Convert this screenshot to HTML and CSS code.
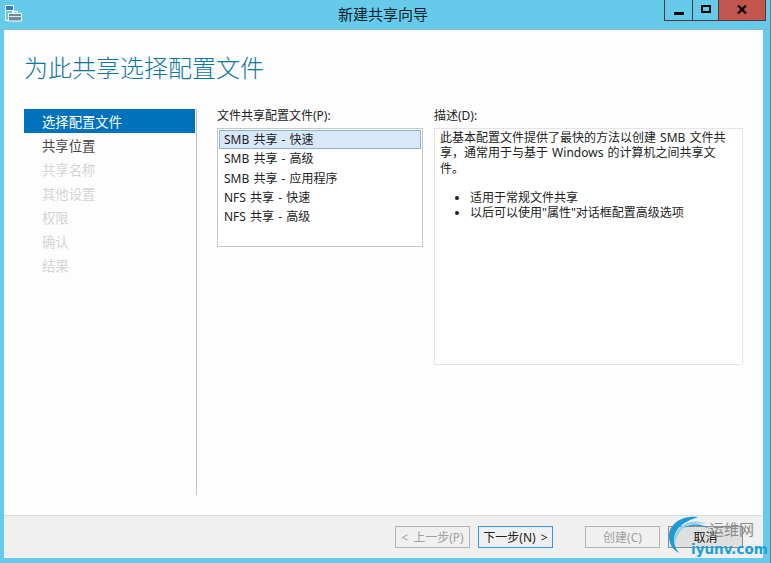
FILE: index.html
```html
<!DOCTYPE html>
<html lang="zh-CN">
<head>
<meta charset="utf-8">
<title>新建共享向导</title>
<link rel="stylesheet" href="styles.css">
</head>
<body>
<div class="window">
  <header class="titlebar">
    <svg class="app-icon" width="17" height="17" viewBox="0 0 17 17">
      <path d="M.5.500h8v15h-8z" fill="#66cbea" stroke="#fff"/>
      <path d="M1 1h7v4H1z" fill="#2b80c8"/>
      <path d="M1 5.500h7" stroke="#fff"/>
      <path d="M3.500 8.500h13v7.500h-13z" fill="#6f8ba0" stroke="#fff"/>
      <path d="M7.500 8.500V6.500h5v2" fill="none" stroke="#fff"/>
      <path d="M4 11.500h12" stroke="#dfe8ee"/>
    </svg>
    <div class="title">新建共享向导</div>
    <div class="controls">
      <div class="ctl ctl-min"><span class="min-glyph"></span></div>
      <div class="ctl ctl-max"><span class="max-glyph"></span></div>
      <div class="ctl ctl-close">
        <svg width="10" height="9" viewBox="0 0 10 9"><path d="M1 .5l8 8M9 .5l-8 8" stroke="#000" stroke-width="2.200" fill="none"/></svg>
      </div>
    </div>
  </header>
  <div class="client">
    <main class="main">
      <h1 class="heading">为此共享选择配置文件</h1>
      <div class="columns">
        <nav class="nav">
          <div class="step step-current">选择配置文件</div>
          <div class="step">共享位置</div>
          <div class="step step-off">共享名称</div>
          <div class="step step-off">其他设置</div>
          <div class="step step-off">权限</div>
          <div class="step step-off">确认</div>
          <div class="step step-off">结果</div>
        </nav>
        <section class="col-list">
          <div class="label">文件共享配置文件(P):</div>
          <div class="listbox">
            <div class="item item-selected">SMB 共享 - 快速</div>
            <div class="item">SMB 共享 - 高级</div>
            <div class="item">SMB 共享 - 应用程序</div>
            <div class="item">NFS 共享 - 快速</div>
            <div class="item">NFS 共享 - 高级</div>
          </div>
        </section>
        <section class="col-desc">
          <div class="label">描述(D):</div>
          <div class="descbox">
            <p class="desc-text">此基本配置文件提供了最快的方法以创建 SMB 文件共享，通常用于与基于 Windows 的计算机之间共享文件。</p>
            <ul class="desc-list">
              <li>适用于常规文件共享</li>
              <li>以后可以使用"属性"对话框配置高级选项</li>
            </ul>
          </div>
        </section>
      </div>
    </main>
    <footer class="footer">
      <button class="btn btn-off">&lt; 上一步(P)</button>
      <button class="btn btn-default">下一步(N) &gt;</button>
      <button class="btn btn-off btn-create">创建(C)</button>
      <button class="btn btn-cancel">取消</button>
    </footer>
  </div>
  <div class="watermark">
    <svg class="wm-swirl" width="52" height="46" viewBox="0 0 52 46">
      <path d="M30 2C14 0 1 9 1 21c0 8 4 14 10 17C6 32 4 23 9 15 14 8 22 5 30 2z" fill="#1b9ad6"/>
      <path d="M38 9C25 3 12 9 8 19c-2 5-2 9-1 12C7 21 14 11 24 9c5-1 10-1 14 0z" fill="#8fd0ec"/>
      <path d="M42 14C33 8 23 8 16 13c7-3 17-3 26 1z" fill="#1b9ad6"/>
    </svg>
    <span class="wm-cn">运维网</span>
    <span class="wm-en">iyunv.com</span>
  </div>
</div>
</body>
</html>
```
FILE: styles.css
```css
* { box-sizing: border-box; }
html, body { margin: 0; padding: 0; }
body {
  width: 771px;
  height: 563px;
  overflow: hidden;
  font-family: "Noto Sans", "Noto Sans CJK SC", sans-serif;
  font-size: 12px;
  word-spacing: 1px;
  color: #1a1a1a;
}
.window {
  position: relative;
  width: 771px;
  height: 563px;
  background: #66cbea;
  display: flex;
  flex-direction: column;
  border-right: 1px solid #3f8fa8;
}
.titlebar {
  height: 30px;
  flex: none;
  display: flex;
  position: relative;
  border-bottom: 1px solid #8fb5c3;
}
.app-icon { margin: 5px 0 0 5px; flex: none; }
.title {
  position: absolute;
  left: 0;
  right: 0;
  top: 5px;
  text-align: center;
  font-size: 15px;
  line-height: 18px;
  color: #10222c;
  padding-right: 4px;
}
.controls {
  position: absolute;
  left: 664px;
  top: 0;
  display: flex;
  height: 21px;
}
.ctl {
  height: 21px;
  border: 1px solid #4d3b3b;
  border-top: none;
  display: flex;
  align-items: center;
  justify-content: center;
}
.ctl-min { width: 29px; }
.ctl-max { width: 26px; border-left: none; }
.ctl-close { width: 47px; border-left: none; background: #c2564c; }
.min-glyph { width: 10px; height: 3px; background: #000; margin-top: 6px; }
.max-glyph { width: 10px; height: 8px; border: 2px solid #000; margin-top: -2px; }
.ctl-close svg { margin-top: -2px; }
.client {
  margin: 0 7px 5px 4px;
  flex: 1;
  min-height: 0;
  display: flex;
  flex-direction: column;
  background: #fdfdfd;
}
.main { flex: 1; min-height: 0; padding: 0 0 20px 20px; display: flex; flex-direction: column; }
.heading {
  margin: 0;
  height: 79px;
  padding-top: 21px;
  font-size: 24px;
  line-height: 34px;
  font-weight: 300;
  color: #0f769f;
  flex: none;
}
.columns { flex: 1; min-height: 0; display: flex; }
.nav {
  width: 173px;
  flex: none;
  border-right: 1px solid #c4c4c4;
  padding-right: 1px;
}
.step {
  height: 24px;
  line-height: 27px;
  padding-left: 18px;
  font-size: 13.33px;
  color: #444;
}
.step-current { background: #0072bc; color: #fff; }
.step-off { color: #d4d4d4; }
.col-list { width: 206px; margin-left: 20px; flex: none; }
.col-desc { width: 309px; margin-left: 11px; flex: none; }
.label { height: 19px; line-height: 14px; margin-bottom: 0; color: #222; }
.listbox {
  height: 119px;
  border: 1px solid #c8c8c8;
  background: #fff;
  padding: 1px;
}
.item {
  height: 19.300px;
  line-height: 19px;
  padding-left: 5px;
  color: #222;
}
.item-selected {
  background: #d8e8fa;
  border: 1px solid #8ab4e0;
  padding-left: 4px;
  line-height: 18px;
}
.descbox {
  height: 237px;
  border: 1px solid #e4e4e8;
  background: #fff;
  padding: 1px 5px;
  line-height: 15.300px;
  color: #222;
}
.desc-text { margin: 0 0 14px; width: 288px; }
.desc-list { margin: 0; padding: 0 0 0 30px; }
.footer {
  height: 43px;
  flex: none;
  background: #f0f0f0;
  border-top: 1px solid #dcdcdc;
  display: flex;
  align-items: flex-start;
  padding: 10px 0 0 391px;
}
.btn {
  width: 75px;
  height: 22px;
  padding: 0;
  border: 1px solid #a8a8a8;
  background: #f0f0f0;
  font: inherit;
  word-spacing: 2px;
  line-height: 19px;
  color: #222;
}
.btn-off { color: #a0a0a0; border-color: #b4b4b4; }
.btn-default { margin-left: 8px; border-color: #3399e8; }
.btn-create { margin-left: 32px; }
.btn-cancel { margin-left: 8px; background: #dfdfdf; border-color: #8e8e8e; color: #111; }
.watermark {
  position: absolute;
  left: 668px;
  top: 514px;
  width: 103px;
  height: 49px;
  pointer-events: none;
}
.wm-swirl { position: absolute; left: 0; top: 1px; }
.wm-cn {
  position: absolute;
  left: 41px;
  top: 5px;
  font-size: 15px;
  line-height: 20px;
  color: #8a8a8a;
}
.wm-en {
  position: absolute;
  left: 23px;
  top: 26px;
  font-family: "DejaVu Sans", sans-serif;
  font-size: 13.5px;
  line-height: 18px;
  font-weight: 700;
  color: #1c9ee0;
  white-space: nowrap;
}
```
